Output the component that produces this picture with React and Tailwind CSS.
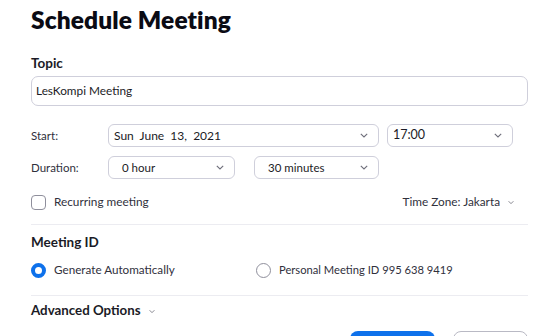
import React from 'react';

function Chevron({ className = '' }) {
  return (
    <svg width="8" height="5" viewBox="0 0 8 5" className={className}>
      <polyline points="0.8,0.8 4,4 7.2,0.8" fill="none" stroke="#6e6e7a" strokeWidth="1.1" />
    </svg>
  );
}

function Select({ value, className = '', pad = 'pl-[5px]', size = 'text-[12px]' }) {
  return (
    <div className={`h-full flex items-center justify-between rounded-[6px] border border-[#cfcfdb] ${pad} pr-[10px] ${className}`}>
      <span className={`${size} text-[#1b1b26] whitespace-pre`}>{value}</span>
      <Chevron />
    </div>
  );
}

export default function App() {
  return (
    <div className="w-[560px] h-[336px] overflow-hidden bg-white font-['Lato',sans-serif]">
      <div className="px-[31px]">
        <div className="h-[40px] flex items-center">
          <h1 className="text-[24.5px] font-extrabold text-[#0b0b14] tracking-[0.1px]">Schedule Meeting</h1>
        </div>

        <div className="mt-[15px] h-[16px] flex items-center text-[13.5px] font-bold text-[#1b1b26]">Topic</div>
        <div className="mt-[5px] h-[30px] w-[497px] rounded-[7px] border border-[#cfcfdb] flex items-center pl-[4px] text-[11.8px] text-[#1b1b26]">
          LesKompi Meeting
        </div>

        <div className="mt-[18px] h-[23px] flex">
          <div className="w-[77px] flex items-center text-[11.5px] text-[#30303c]">Start:</div>
          <Select value={'Sun  June  13,  2021'} className="w-[271px]" pad="pl-[5px] pr-[8px]" />
          <Select value="17:00" className="w-[126px] ml-[8px]" size="text-[12.5px]" />
        </div>

        <div className="mt-[9px] h-[23px] flex">
          <div className="w-[77px] flex items-center text-[11.5px] text-[#30303c]">Duration:</div>
          <Select value="0 hour" className="w-[127px]" pad="pl-[13px]" size="text-[11.5px]" />
          <Select value="30 minutes" className="w-[125px] ml-[19px]" pad="pl-[13px]" size="text-[11.5px]" />
        </div>

        <div className="mt-[15px] h-[16px] flex items-center justify-between w-[484px]">
          <div className="flex items-center">
            <div className="w-[15px] h-[15px] rounded-[4px] border border-[#8f8f9c]" />
            <span className="ml-[8px] text-[11.8px] text-[#30303c]">Recurring meeting</span>
          </div>
          <div className="flex items-center">
            <span className="text-[11.8px] text-[#30303c]">Time Zone: Jakarta</span>
            <Chevron className="ml-[7px] scale-75" />
          </div>
        </div>

        <div className="mt-[14px] h-px w-[497px] bg-[#ececf1]" />

        <div className="mt-[9px] h-[16px] flex items-center text-[13.5px] font-bold text-[#1b1b26]">Meeting ID</div>

        <div className="mt-[12px] h-[16px] flex items-center">
          <div className="w-[225px] flex items-center">
            <div className="w-[15px] h-[15px] rounded-full border-[4px] border-[#0e71eb] bg-white" />
            <span className="ml-[8px] text-[11.7px] text-[#30303c]">Generate Automatically</span>
          </div>
          <div className="flex items-center">
            <div className="w-[15px] h-[15px] rounded-full border border-[#8f8f9c]" />
            <span className="ml-[8px] text-[11.2px] text-[#30303c]">Personal Meeting ID 995 638 9419</span>
          </div>
        </div>

        <div className="mt-[17px] h-px w-[497px] bg-[#ececf1]" />

        <div className="mt-[7px] h-[16px] flex items-center">
          <span className="text-[13.3px] font-bold text-[#1b1b26]">Advanced Options</span>
          <Chevron className="ml-[7px] scale-75" />
        </div>

        <div className="mt-[12px] h-[30px] w-[497px] flex justify-end gap-[18px]">
          <button aria-label="Save" className="w-[85px] h-full rounded-[8px] bg-[#0e71eb]" />
          <button aria-label="Cancel" className="w-[75px] h-full rounded-[8px] border border-[#b9b9c4] bg-white" />
        </div>
      </div>
    </div>
  );
}
